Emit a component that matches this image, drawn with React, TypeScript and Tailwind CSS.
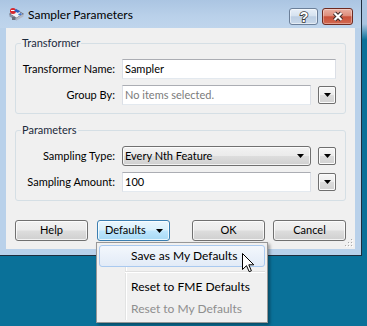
import React from "react";

const Tri = () => (
  <svg width="7" height="4" viewBox="0 0 7 4" className="block">
    <path d="M0 0H7L3.5 4Z" fill="#000" />
  </svg>
);

const DropBtn = () => (
  <div className="ml-[7px] flex h-[18px] w-[18px] shrink-0 items-center justify-center rounded-[2px] border border-[#6f6f6f] bg-[linear-gradient(to_bottom,#f7f7f7_0%,#ececec_50%,#dcdcdc_51%,#d2d2d2_100%)] shadow-[inset_0_0_0_1px_#fbfbfb]">
    <Tri />
  </div>
);

const Field = ({ children, muted }: { children: React.ReactNode; muted?: boolean }) => (
  <div
    className={`flex h-[20px] min-w-0 flex-1 items-center border border-t-[#abadb3] border-x-[#dbdfe6] border-b-[#e3e9ef] bg-white px-[2px] ${
      muted ? "text-[#7b7b7b]" : "text-black"
    }`}
  >
    {children}
  </div>
);

const Row = ({ label, children }: { label: string; children: React.ReactNode }) => (
  <div className="flex h-[20px] items-center">
    <div className="w-[99px] shrink-0 text-right">{label}</div>
    <div className="ml-[7px] flex min-w-0 flex-1 items-center">{children}</div>
  </div>
);

const WinButton = ({ children, hot }: { children: React.ReactNode; hot?: boolean }) => (
  <div
    className={`flex h-[21px] w-[73px] items-center rounded-[3px] border shadow-[inset_0_0_0_1px_rgba(255,255,255,0.75)] ${
      hot
        ? "border-[#3c7fb1] bg-[linear-gradient(to_bottom,#eaf6fd_0%,#d9f0fc_48%,#bee6fd_52%,#a7d9f5_100%)] justify-between pl-[7px] pr-[6px]"
        : "border-[#707070] bg-[linear-gradient(to_bottom,#f2f2f2_0%,#ebebeb_48%,#dddddd_52%,#cfcfcf_100%)] justify-center"
    }`}
  >
    {children}
  </div>
);

const GroupBox = ({ title, children }: { title: string; children: React.ReactNode }) => (
  <fieldset className="rounded-[3px] border border-[#d5dfe5] pb-[8px] pr-[9px] pt-[8px]">
    <legend className="ml-[5px] px-[1px] leading-[16px] text-[#1b2a3c]">{title}</legend>
    <div className="flex flex-col gap-[6px]">{children}</div>
  </fieldset>
);

const AppIcon = () => (
  <svg width="17" height="17" viewBox="0 0 17 17" className="block">
    <path d="M1.5 8 L8.5 4 L15.5 8 L8.5 12 Z" fill="#eef0f5" stroke="#6a7080" strokeWidth="1" />
    <path d="M1.5 8 L1.5 10.5 L8.5 14.5 L8.5 12 Z" fill="#8a90a2" />
    <path d="M8.5 12 L15.5 8 L15.5 10.5 L8.5 14.5 Z" fill="#b4b9c6" />
    <circle cx="5" cy="5" r="3" fill="#d9262b" />
    <path d="M3 4.5 h4" stroke="#fff" strokeWidth="1" />
    <path d="M8 3 l4 2 l-2 2 l-4 -2 z" fill="#2f5fbf" />
    <path d="M10 8 l3 -1 l1 1.5 l-3 1 z" fill="#3a72d0" />
    <rect x="4" y="11" width="3" height="3" fill="#6a6f7d" />
  </svg>
);

export default function App() {
  return (
    <div className="relative h-[326px] w-[367px] overflow-hidden bg-[linear-gradient(to_bottom,#a9c4e0_0px,#a9c4e0_24px,#0a7199_40px)] font-['Lato',sans-serif] text-[11px] text-black">
      {/* window */}
      <div className="w-[362px] border-b border-r border-[#1f2d3d] bg-[#b9d1ea]">
        {/* title bar */}
        <div className="flex h-[28px] items-start bg-[linear-gradient(to_bottom,#abc5e2_0%,#bad1ea_60%,#bfd5ec_100%)]">
          <div className="ml-[8px] mt-[6px]">
            <AppIcon />
          </div>
          <div className="ml-[3px] mt-[7px] text-[12px] leading-[16px] text-black">Sampler Parameters</div>
          <div className="flex-1" />
          <div className="mt-[8px] flex h-[17px] w-[29px] items-center justify-center rounded-[3px] border border-[#6b7f99] bg-[linear-gradient(to_bottom,#e8eff8_0%,#d5e2f0_45%,#bccee3_52%,#c9d9ea_100%)] shadow-[inset_0_0_0_1px_rgba(255,255,255,0.5)]">
            <svg width="12" height="14" viewBox="0 0 12 14" className="block">
              <text
                x="6"
                y="12"
                textAnchor="middle"
                fontSize="14"
                fontWeight="bold"
                fontFamily="Liberation Sans, sans-serif"
                fill="#fff"
                stroke="#3b3b3b"
                strokeWidth="1.6"
                paintOrder="stroke"
              >
                ?
              </text>
            </svg>
          </div>
          <div className="ml-[4px] mr-[8px] mt-[8px] flex h-[17px] w-[31px] items-center justify-center rounded-[3px] border border-[#6e2a20] bg-[linear-gradient(to_bottom,#eab0a3_0%,#de8d7b_45%,#c9503a_52%,#d26a52_100%)] shadow-[inset_0_0_0_1px_rgba(255,255,255,0.35)]">
            <svg width="14" height="11" viewBox="0 0 14 11" className="block">
              <path d="M3.5 2L10.5 9M10.5 2L3.5 9" stroke="#3b2b2b" strokeWidth="4.2" />
              <path d="M3.5 2L10.5 9M10.5 2L3.5 9" stroke="#fff" strokeWidth="2.2" />
            </svg>
          </div>
        </div>

        {/* client area */}
        <div className="px-[6px]">
          <div className="relative flex h-[221px] w-[349px] flex-col bg-[#f0f0f0] px-[9px] pt-[7px]">
            <GroupBox title="Transformer">
              <Row label="Transformer Name:">
                <Field>Sampler</Field>
              </Row>
              <Row label="Group By:">
                <Field muted>No items selected.</Field>
                <DropBtn />
              </Row>
            </GroupBox>

            <div className="mt-[8px]">
              <GroupBox title="Parameters">
                <Row label="Sampling Type:">
                  <div className="flex h-[20px] min-w-0 flex-1 items-center justify-between rounded-[3px] border border-[#707070] bg-[linear-gradient(to_bottom,#f2f2f2_0%,#ebebeb_48%,#dddddd_52%,#cfcfcf_100%)] pl-[2px] pr-[6px] shadow-[inset_0_0_0_1px_rgba(255,255,255,0.75)]">
                    <span>Every Nth Feature</span>
                    <Tri />
                  </div>
                  <DropBtn />
                </Row>
                <Row label="Sampling Amount:">
                  <Field>100</Field>
                  <DropBtn />
                </Row>
              </GroupBox>
            </div>

            <div className="mt-[19px] flex justify-between">
              <div className="flex gap-[9px]">
                <WinButton>Help</WinButton>
                <WinButton hot>
                  <span>Defaults</span>
                  <Tri />
                </WinButton>
              </div>
              <div className="flex gap-[8px]">
                <WinButton>OK</WinButton>
                <WinButton>Cancel</WinButton>
              </div>
            </div>

            {/* size grip */}
            <svg width="8" height="8" viewBox="0 0 8 8" className="absolute bottom-[2px] right-[2px] block">
              {[
                [6, 0],
                [6, 3],
                [3, 3],
                [6, 6],
                [3, 6],
                [0, 6],
              ].map(([x, y], i) => (
                <g key={i}>
                  <rect x={x + 1} y={y + 1} width="1" height="1" fill="#ffffff" />
                  <rect x={x} y={y} width="1" height="1" fill="#a9a9a9" />
                </g>
              ))}
            </svg>
          </div>
        </div>
        <div className="h-[6px]" />
      </div>

      {/* popup menu */}
      <div className="absolute left-[96px] top-[242px] w-[172px] border border-[#979797] bg-[#f0f0f0] p-[2px] text-[12px] shadow-[2px_2px_3px_rgba(0,0,0,0.35)]">
        <div className="absolute bottom-[2px] left-[28px] top-[2px] w-[2px] border-l border-r border-l-[#e2e3e3] border-r-white" />
        <div className="relative flex h-[22px] items-center rounded-[3px] border border-[#a9c9ef] bg-[linear-gradient(to_bottom,#f3f7fc_0%,#e2ebf7_100%)] pl-[31px]">
          Save as My Defaults
        </div>
        <div className="relative flex h-[9px] items-center pl-[26px]">
          <div className="h-[2px] w-full border-b border-t border-b-white border-t-[#e0e0e0]" />
        </div>
        <div className="relative flex h-[22px] items-center pl-[32px]">Reset to FME Defaults</div>
        <div className="relative flex h-[22px] items-center pl-[32px] text-[#8e8e8e]">Reset to My Defaults</div>
      </div>

      {/* mouse cursor */}
      <svg width="13" height="20" viewBox="0 0 13 20" className="absolute left-[242px] top-[253px] block">
        <path
          d="M0.5 0.5 L0.5 16.5 L4.5 12.7 L7.2 18.7 L9.4 17.8 L6.8 11.8 L11.8 11.8 Z"
          fill="#fff"
          stroke="#000"
          strokeWidth="1"
          strokeLinejoin="miter"
        />
      </svg>
    </div>
  );
}
